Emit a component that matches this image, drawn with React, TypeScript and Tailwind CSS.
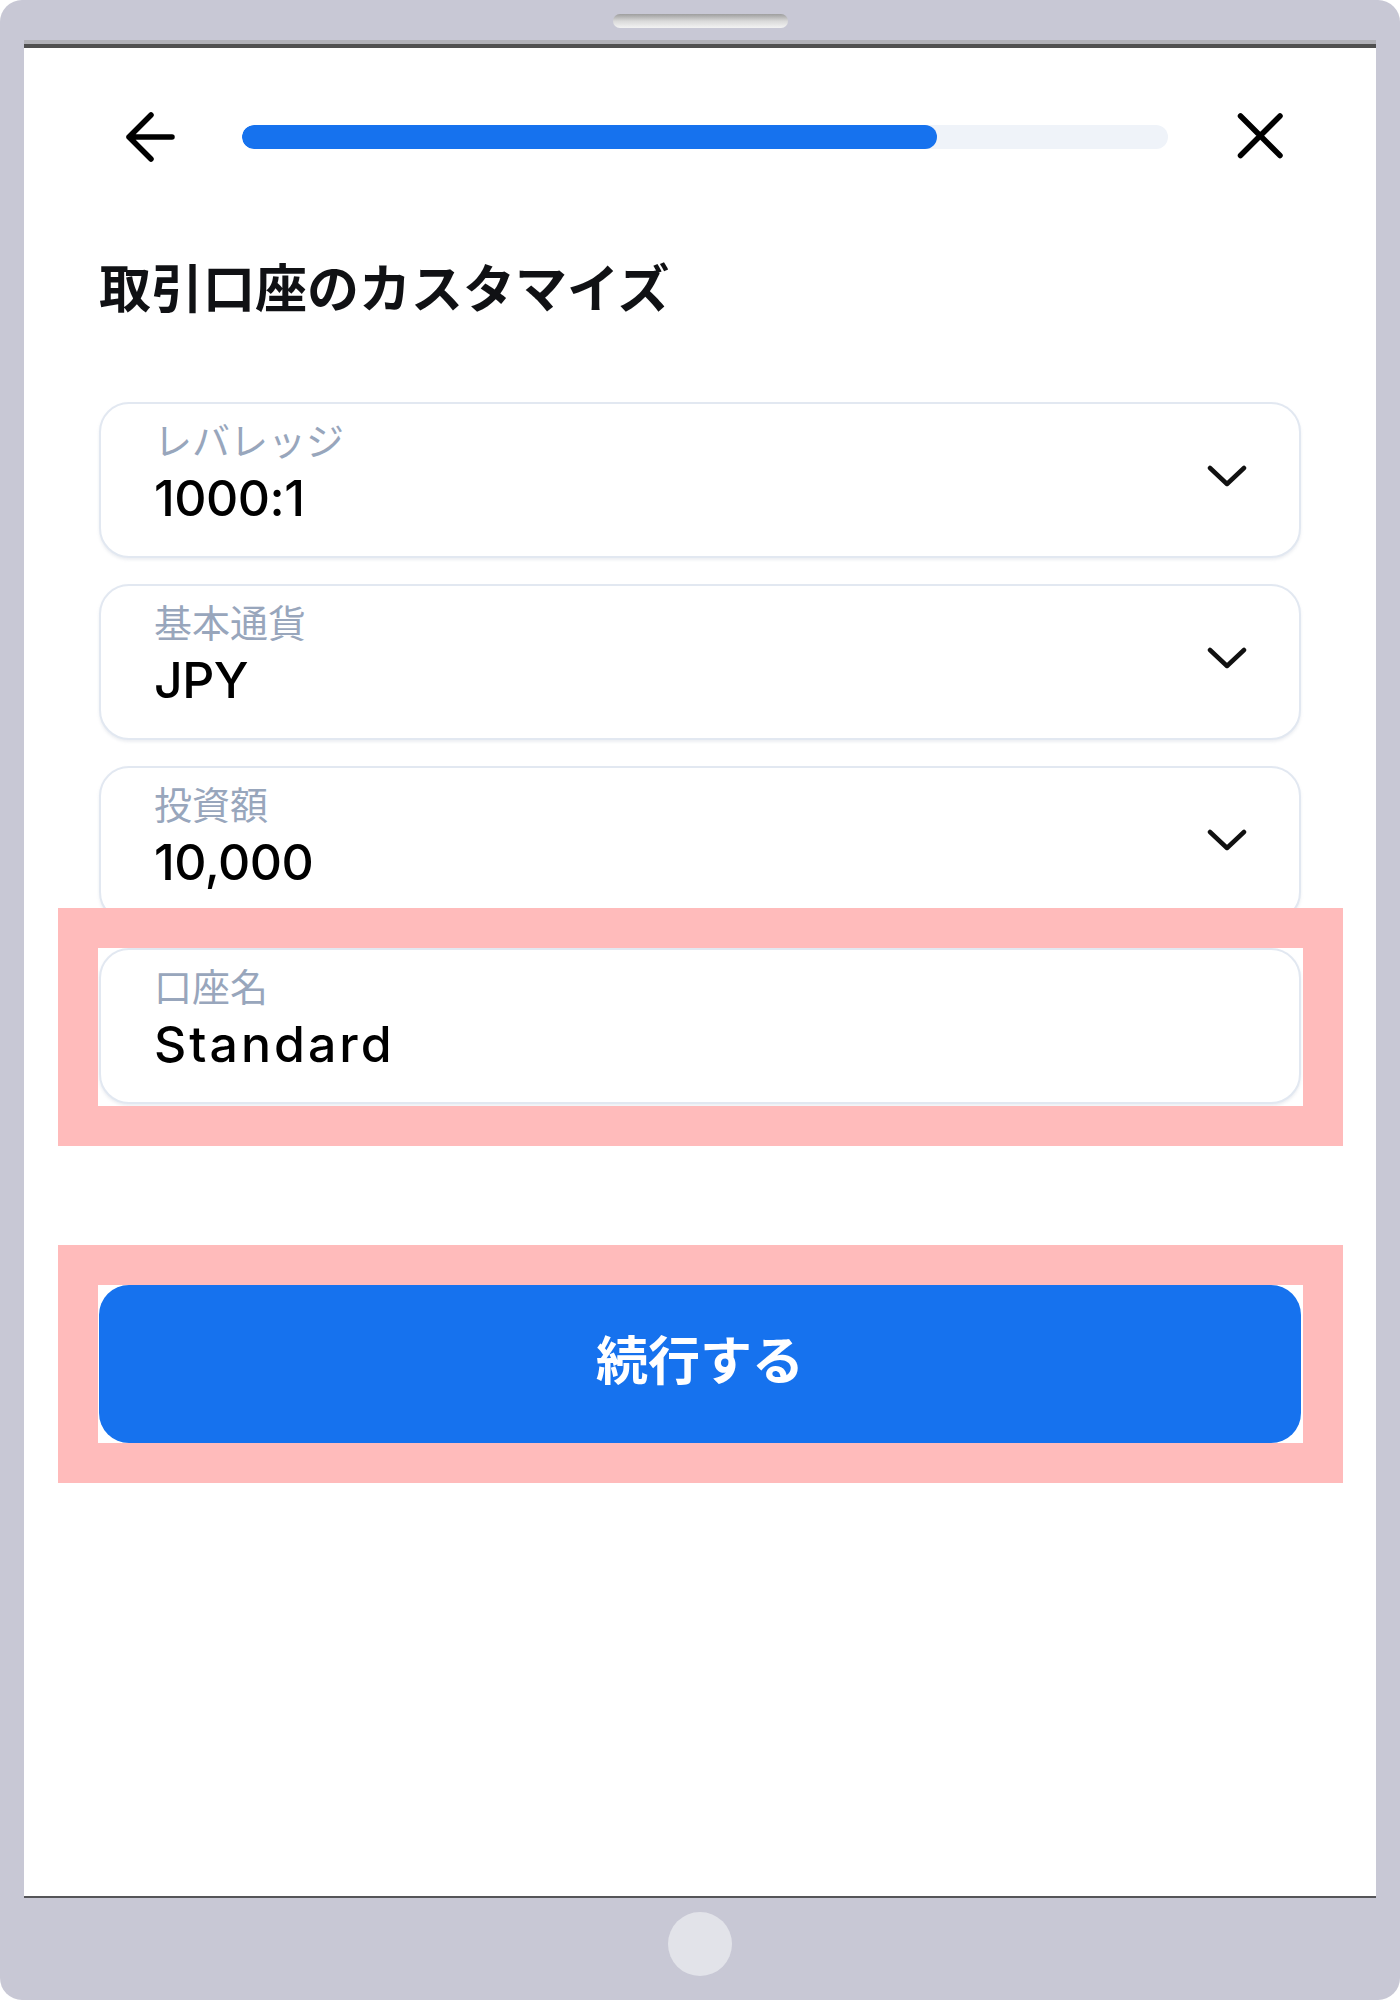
import React from "react";

const jp = { fontFamily: '"Noto Sans CJK JP", "Noto Sans", sans-serif' };
const latin = { fontFamily: 'Inter, "Noto Sans CJK JP", sans-serif' };

function Chevron() {
  return (
    <svg width="40" height="24" viewBox="0 0 40 24" fill="none" className="shrink-0">
      <polyline points="3,4 20,20 37,4" stroke="#111111" strokeWidth="4.5" strokeLinecap="round" strokeLinejoin="round" />
    </svg>
  );
}

function Field({ label, value, chevron = true, wide = false }: { label: string; value: string; chevron?: boolean; wide?: boolean }) {
  return (
    <div className="h-[156px] rounded-[30px] border-2 border-[#e2e8f1] bg-white shadow-[0_2px_3px_rgba(148,163,184,0.18)] flex items-center pl-[53px] pr-[52px]">
      <div className="flex-1 flex flex-col self-stretch pt-[16px]">
        <div className="text-[38px] leading-[38px] text-[#98a6bc]" style={jp}>
          {label}
        </div>
        <div
          className={
            wide
              ? "mt-[15px] text-[50px] leading-[50px] font-medium text-black tracking-[3px]"
              : "mt-[15px] text-[50px] leading-[50px] font-medium text-black tracking-[-0.5px]"
          }
          style={latin}
        >
          {value}
        </div>
      </div>
      {chevron && (
        <div className="mb-[8px]">
          <Chevron />
        </div>
      )}
    </div>
  );
}

export default function App() {
  return (
    <div className="w-[1400px] h-[2000px] bg-white">
      <div className="w-[1400px] h-[2000px] bg-[#c8c8d5] rounded-[22px] flex flex-col items-center">
        {/* speaker */}
        <div className="mt-[14px] w-[175px] h-[14px] rounded-full bg-gradient-to-b from-[#9e9e9e] via-[#d9d9d9] to-[#f3f3f3]" />
        {/* screen */}
        <div className="mt-[12px] w-[1352px] flex flex-col">
          <div className="h-[4px] bg-[#b1b1b7]" />
          <div className="h-[4px] bg-[#505050]" />
          <div className="h-[1848px] bg-white flex flex-col">
            {/* header */}
            <div className="mt-[59px] h-[60px] flex items-center pl-[100px] pr-[92px]">
              <svg width="52" height="52" viewBox="0 0 52 52" fill="none" className="shrink-0">
                <path d="M48 26 H5 M27 4 L5 26 L27 48" stroke="#000" strokeWidth="5.5" strokeLinecap="round" strokeLinejoin="round" />
              </svg>
              <div className="ml-[66px] flex-1 h-[24px] rounded-full bg-[#eff3f9] overflow-hidden">
                <div className="h-full w-[75%] rounded-full bg-[#1672ee]" />
              </div>
              <svg width="48" height="48" viewBox="0 0 48 48" fill="none" className="ml-[68px] shrink-0">
                <path d="M4.5 3 L44 42.5 M44 3 L4.5 42.5" stroke="#000" strokeWidth="5.5" strokeLinecap="round" />
              </svg>
            </div>

            <div className="px-[75px] flex flex-col">
              <h1 className="mt-[93px] text-[52px] leading-[52px] font-bold text-[#101114]" style={jp}>
                取引口座のカスタマイズ
              </h1>

              <div className="mt-[90px] flex flex-col gap-[26px]">
                <Field label="レバレッジ" value="1000:1" />
                <Field label="基本通貨" value="JPY" />
                <Field label="投資額" value="10,000" />
                <div className="relative">
                  <Field label="口座名" value="Standard" chevron={false} wide />
                  <div className="absolute -left-[41px] -right-[42px] -top-[40px] -bottom-[42px] border-[40px] border-[#ffbbbb] pointer-events-none" />
                </div>
              </div>

              <div className="relative mt-[181px]">
                <button className="w-full h-[158px] rounded-[30px] bg-[#1672ee] text-white text-[52px] leading-[52px] font-bold pb-[12px]" style={jp}>
                  続行する
                </button>
                <div className="absolute -left-[41px] -right-[42px] -top-[40px] -bottom-[40px] border-[40px] border-[#ffbbbb] pointer-events-none" />
              </div>
            </div>
          </div>
          <div className="h-[2px] bg-[#555558]" />
        </div>
        {/* home button */}
        <div className="mt-[14px] w-[64px] h-[64px] rounded-full bg-[#e2e3e9]" />
      </div>
    </div>
  );
}
